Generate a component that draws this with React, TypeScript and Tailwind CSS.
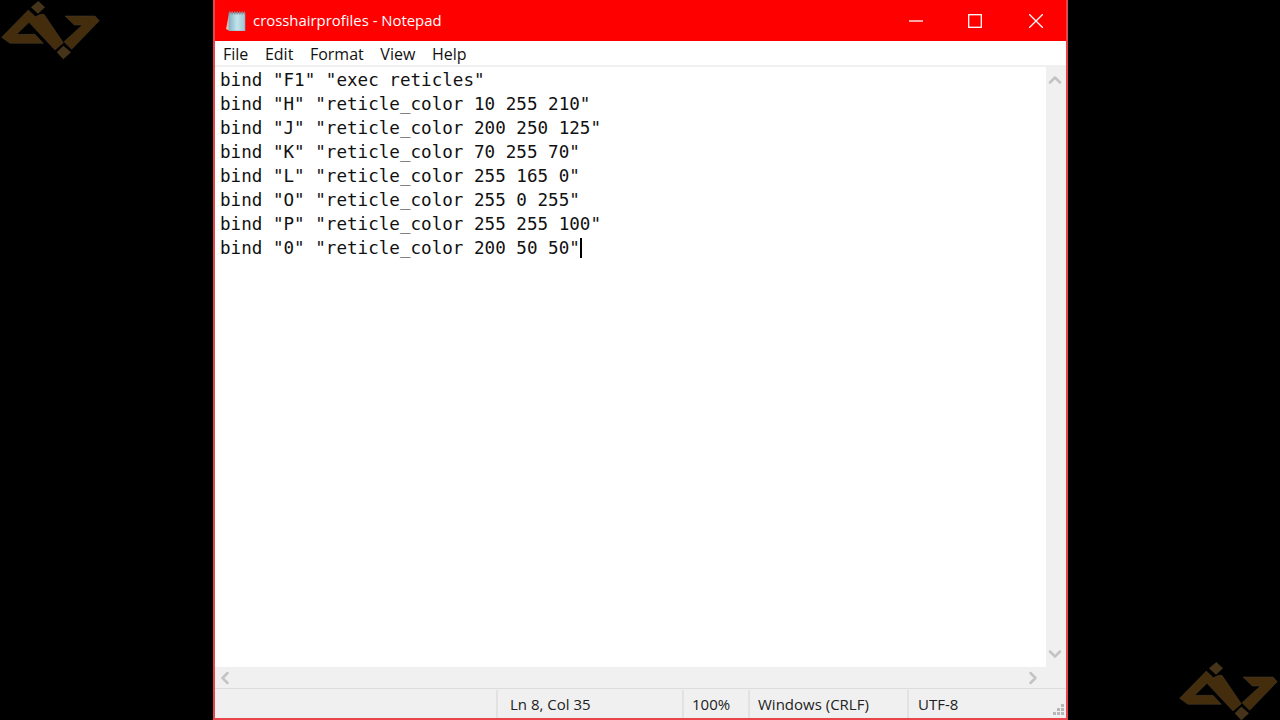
import { ChevronUp, ChevronDown, ChevronLeft, ChevronRight } from 'lucide-react';

const lines = [
  'bind "F1" "exec reticles"',
  'bind "H" "reticle_color 10 255 210"',
  'bind "J" "reticle_color 200 250 125"',
  'bind "K" "reticle_color 70 255 70"',
  'bind "L" "reticle_color 255 165 0"',
  'bind "O" "reticle_color 255 0 255"',
  'bind "P" "reticle_color 255 255 100"',
];

function Logo() {
  return (
    <svg width="100" height="60" viewBox="0 0 300 180" className="block">
      <g fill="#432d0c" stroke="#4a4030" strokeWidth="1.5">
        <path d="M85 30 L106 50 L122 43 L132 43 L190 128 L165 150 L87 67 L50 103 L105 103 L130 130 L30 130 L5 112 Z" />
        <path d="M195 48 L285 48 L298 62 L215 148 L192 125 L247 75 L223 75 Z" />
      </g>
      <g fill="#46341a">
        <path d="M115 3 L135 22 L114 41 L93 22 Z" />
        <path d="M190 137 L213 157 L190 178 L170 157 Z" />
      </g>
    </svg>
  );
}

function NotepadIcon() {
  return (
    <svg width="20" height="20" viewBox="0 0 20 20" className="block shrink-0">
      <defs>
        <linearGradient id="pad" x1="0" y1="0" x2="1" y2="0">
          <stop offset="0" stopColor="#7fb4c6" />
          <stop offset="0.5" stopColor="#c4e3ea" />
          <stop offset="1" stopColor="#9cc6d6" />
        </linearGradient>
      </defs>
      <path d="M3 3 L0 18 L4 20 L6 3 Z" fill="#f3b6a8" />
      <rect x="3" y="2" width="16" height="18" fill="url(#pad)" stroke="#8aa4b0" strokeWidth="0.6" />
      <path d="M3 2 H19" stroke="#8c8f96" strokeWidth="3" strokeDasharray="1.5 1" />
    </svg>
  );
}

export default function App() {
  return (
    <div className="flex h-[720px] w-[1280px] overflow-hidden bg-black font-['Open_Sans','Noto_Sans',sans-serif]">
      <div className="w-[213px] shrink-0">
        <Logo />
      </div>

      <div className="flex w-[855px] shrink-0 flex-col border-x-2 border-b-2 border-[#e8454b] bg-[#f0f0f0]">
        {/* title bar */}
        <div className="flex h-[41px] shrink-0 items-center bg-[#ff0000] pl-[11px] text-white">
          <NotepadIcon />
          <span className="ml-[7px] flex-1 text-[14.9px]">crosshairprofiles - Notepad</span>
          <div className="flex h-full items-center">
            <div className="flex w-[60px] justify-center">
              <svg width="14" height="14" viewBox="0 0 14 14"><path d="M0 7 H14" stroke="#fff" strokeWidth="1.3" /></svg>
            </div>
            <div className="flex w-[60px] justify-center pr-[2px]">
              <svg width="14" height="14" viewBox="0 0 14 14"><rect x="0.7" y="0.7" width="12.6" height="12.6" fill="none" stroke="#fff" strokeWidth="1.3" /></svg>
            </div>
            <div className="flex w-[60px] justify-center">
              <svg width="14" height="14" viewBox="0 0 14 14"><path d="M0 0 L14 14 M14 0 L0 14" stroke="#fff" strokeWidth="1.3" /></svg>
            </div>
          </div>
        </div>

        {/* menu */}
        <div className="flex h-[24px] shrink-0 items-center gap-[16.6px] bg-white pl-[8px] pt-[1px] text-[16px] text-[#111]">
          <span>File</span>
          <span>Edit</span>
          <span>Format</span>
          <span>View</span>
          <span>Help</span>
        </div>
        <div className="h-[2px] shrink-0 bg-[#f0f0f0]" />

        {/* editor + vertical scrollbar */}
        <div className="flex min-h-0 flex-1">
          <div className="flex-1 bg-white pl-[5px] pt-[1px] font-['DejaVu_Sans_Mono',monospace] text-[17.58px] leading-[24px] text-[#111]">
            {lines.map((line) => (
              <div key={line} className="whitespace-pre">{line}</div>
            ))}
            <div className="flex items-center whitespace-pre">
              bind "0" "reticle_color 200 50 50"
              <span className="h-[20px] w-[2px] bg-black" />
            </div>
          </div>
          <div className="flex w-[20px] shrink-0 flex-col items-center justify-between py-[3px] pr-[2px] text-[#c3c3c3]">
            <ChevronUp size={20} strokeWidth={3} />
            <ChevronDown size={20} strokeWidth={3} />
          </div>
        </div>

        {/* horizontal scrollbar */}
        <div className="flex h-[21px] shrink-0 items-center justify-between pr-[23px] text-[#c3c3c3]">
          <ChevronLeft size={20} strokeWidth={3} />
          <ChevronRight size={20} strokeWidth={3} />
        </div>

        {/* status bar */}
        <div className="flex h-[30px] shrink-0 items-center border-t border-[#dcdcdc] pt-[1px] text-[15px] text-[#222]">
          <div className="w-[281px] shrink-0" />
          <div className="flex h-full w-[186px] items-center border-l-2 border-[#e2e2e2] pl-[12px]">Ln 8, Col 35</div>
          <div className="flex h-full w-[66px] items-center border-l-2 border-[#e2e2e2] pl-[8px]">100%</div>
          <div className="flex h-full w-[159px] items-center border-l-2 border-[#e2e2e2] pl-[8px]">Windows (CRLF)</div>
          <div className="flex h-full flex-1 items-center justify-between border-l-2 border-[#e2e2e2] pl-[9px] pr-[2px]">
            <span>UTF-8</span>
            <svg width="12" height="12" viewBox="0 0 12 12" className="mt-[10px] block">
              <g fill="#b8b8b8">
                <rect x="9" y="1" width="3" height="3" />
                <rect x="5" y="5" width="3" height="3" />
                <rect x="9" y="5" width="3" height="3" />
                <rect x="1" y="9" width="3" height="3" />
                <rect x="5" y="9" width="3" height="3" />
                <rect x="9" y="9" width="3" height="3" />
              </g>
            </svg>
          </div>
        </div>
      </div>

      <div className="flex w-[212px] shrink-0 flex-col items-end justify-end pr-[2px]">
        <div className="-mb-px">
          <Logo />
        </div>
      </div>
    </div>
  );
}
